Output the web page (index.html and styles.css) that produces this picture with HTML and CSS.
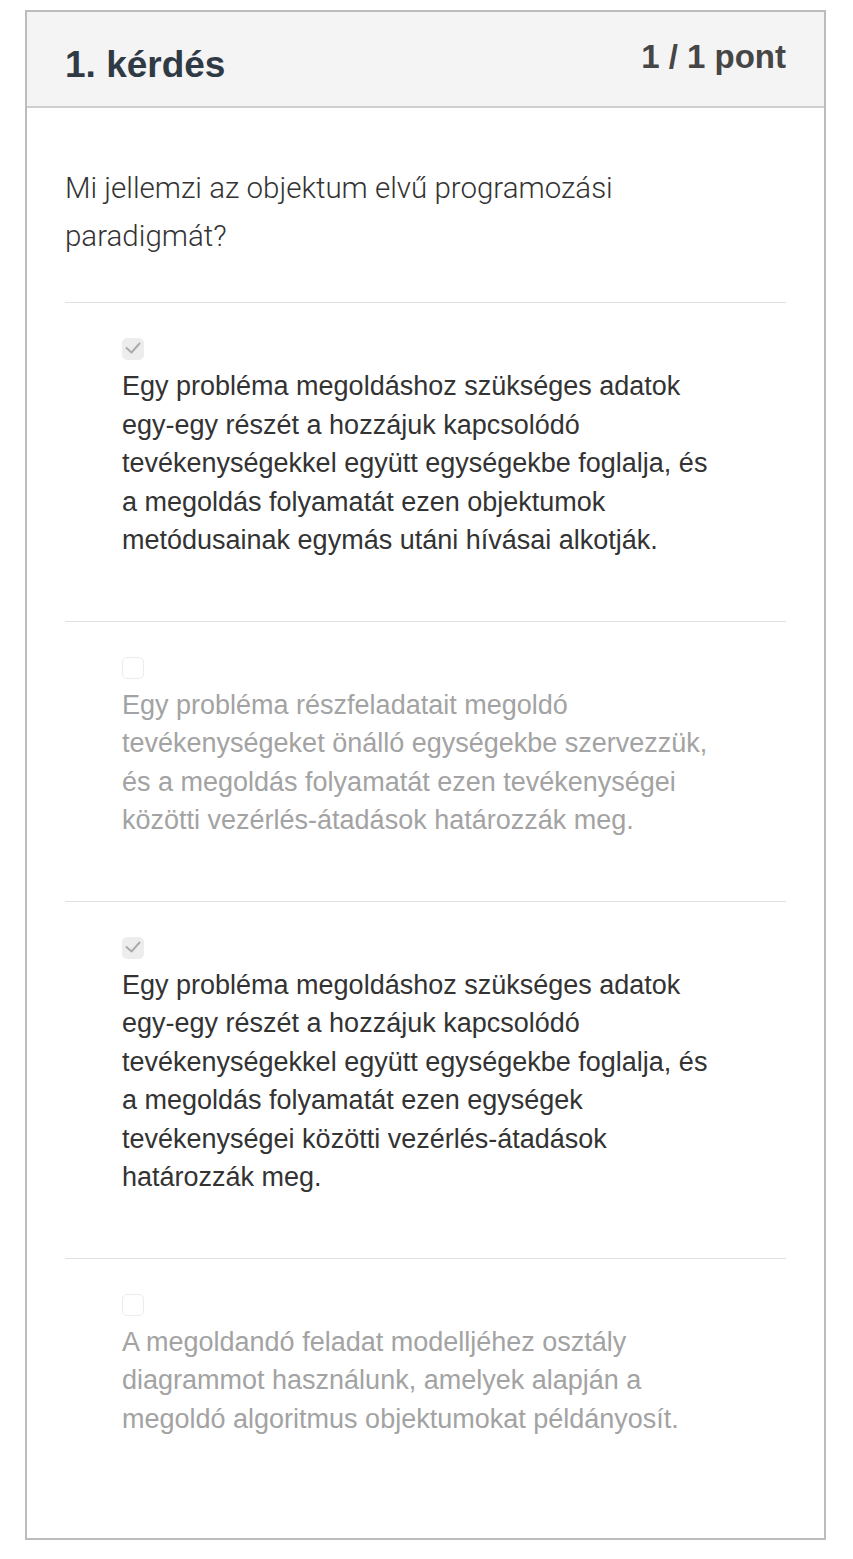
FILE: index.html
```html
<!DOCTYPE html>
<html lang="hu">
<head>
<meta charset="utf-8">
<title>1. kérdés</title>
<link rel="stylesheet" href="styles.css">
</head>
<body>
<div class="card">
  <div class="card-head">
    <h2 class="title">1. kérdés</h2>
    <div class="score">1 / 1 pont</div>
  </div>
  <div class="card-body">
    <p class="question">Mi jellemzi az objektum elvű programozási paradigmát?</p>
    <div class="option checked">
      <span class="box"><svg viewBox="0 0 22 22" width="22" height="22"><path d="M4.5 10 L9.5 14.5 L17.5 5.5" fill="none" stroke="#aaaaaa" stroke-width="1.9" stroke-linecap="round" stroke-linejoin="round"/></svg></span>
      <div class="text">Egy probléma megoldáshoz szükséges adatok egy-egy részét a hozzájuk kapcsolódó tevékenységekkel együtt egységekbe foglalja, és a megoldás folyamatát ezen objektumok metódusainak egymás utáni hívásai alkotják.</div>
    </div>
    <div class="option">
      <span class="box"></span>
      <div class="text">Egy probléma részfeladatait megoldó tevékenységeket önálló egységekbe szervezzük, és a megoldás folyamatát ezen tevékenységei közötti vezérlés-átadások határozzák meg.</div>
    </div>
    <div class="option checked">
      <span class="box"><svg viewBox="0 0 22 22" width="22" height="22"><path d="M4.5 10 L9.5 14.5 L17.5 5.5" fill="none" stroke="#aaaaaa" stroke-width="1.9" stroke-linecap="round" stroke-linejoin="round"/></svg></span>
      <div class="text">Egy probléma megoldáshoz szükséges adatok egy-egy részét a hozzájuk kapcsolódó tevékenységekkel együtt egységekbe foglalja, és a megoldás folyamatát ezen egységek tevékenységei közötti vezérlés-átadások határozzák meg.</div>
    </div>
    <div class="option">
      <span class="box"></span>
      <div class="text">A megoldandó feladat modelljéhez osztály diagrammot használunk, amelyek alapján a megoldó algoritmus objektumokat példányosít.</div>
    </div>
  </div>
</div>
</body>
</html>
```

FILE: styles.css
```css
html, body {
  margin: 0;
  padding: 0;
  background: #ffffff;
}
body {
  padding: 10px 27px 19px 25px;
  font-family: "Liberation Sans", Arial, sans-serif;
}
.card {
  border: 2px solid #bcbcbc;
  background: #fff;
}
.card-head {
  background: #f4f4f4;
  border-bottom: 2px solid #cfcfcf;
  height: 94px;
  display: flex;
  justify-content: space-between;
  align-items: flex-start;
  padding: 0 38px;
}
.title {
  margin: 32px 0 0 0;
  font-size: 37px;
  font-weight: 700;
  color: #2f3a44;
  line-height: 42px;
}
.score {
  margin-top: 26px;
  font-size: 33px;
  font-weight: 700;
  color: #464646;
  line-height: 38px;
}
.card-body {
  padding: 56px 38px 39px 38px;
}
.question {
  margin: 0 0 42px 0;
  font-family: Roboto, "Liberation Sans", sans-serif;
  font-weight: 300;
  font-size: 29.5px;
  line-height: 48px;
  color: #333;
  width: 600px;
}
.option {
  border-top: 1px solid #e0e0e0;
  padding: 35px 0 61px 57px;
}
.box {
  display: block;
  width: 20px;
  height: 20px;
  border: 1px solid #ececec;
  border-radius: 5px;
  background: #fff;
  margin-bottom: 7px;
  overflow: hidden;
}
.box svg {
  display: block;
  margin: -1px;
}
.option.checked .box {
  background: #ededed;
  border-color: #ededed;
}
.text {
  width: 600px;
  font-size: 27px;
  line-height: 38.5px;
  color: #a3a3a3;
}
.option.checked .text {
  color: #333;
}
```
